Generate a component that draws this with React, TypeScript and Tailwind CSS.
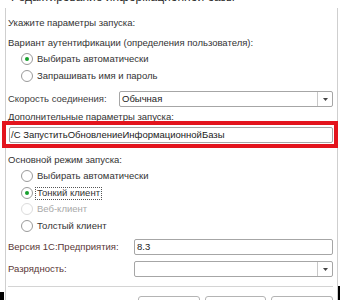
import React from "react";

function Radio({ label, checked, disabled, focus }: { label: string; checked?: boolean; disabled?: boolean; focus?: boolean }) {
  return (
    <div className="flex h-[16px] shrink-0 items-center pl-[13px]">
      <div
        className={
          "flex h-[12px] w-[12px] items-center justify-center rounded-full border bg-white " +
          (disabled ? "border-[#dcdcdc]" : "border-[#9a9a9a]")
        }
      >
        {checked && <div className="h-[4px] w-[4px] rounded-full bg-[#17a02e]" />}
      </div>
      <div
        className={
          "ml-[2px] flex h-[13px] items-center px-[1px] " +
          (focus ? "border border-dotted border-[#555]" : "border border-transparent") +
          (disabled ? " text-[#a8a8a8]" : " text-[#333]")
        }
      >
        {label}
      </div>
    </div>
  );
}

function Arrow() {
  return (
    <div className="flex w-[15px] items-center justify-center border-l border-[#c8c8c8]">
      <svg width="5" height="3" viewBox="0 0 5 3">
        <path d="M0 0 L5 0 L2.5 3 Z" fill="#444" />
      </svg>
    </div>
  );
}

export default function App() {
  return (
    <div className="relative h-[300px] w-[340px] overflow-hidden bg-white font-['Liberation_Sans',Arial,sans-serif] text-[9.5px] leading-none text-[#333]">
      {/* title strip (mostly scrolled off) */}
      <div className="h-[8px] overflow-hidden pl-[11px]">
        <div className="-mt-[9px] text-[12px] leading-[12px] text-[#2b2b2b]">Редактирование информационной базы</div>
      </div>

      <div className="ml-[5px] mr-[2px] flex flex-col border-l border-r border-[#cfcfcf] pb-[10px] pl-[2px] pr-[4px]">
        <div className="mt-[7px] flex h-[16px] shrink-0 items-center">Укажите параметры запуска:</div>
        <div className="mt-[4px] flex h-[16px] shrink-0 items-center">Вариант аутентификации (определения пользователя):</div>
        <Radio label="Выбирать автоматически" checked />
        <div className="mt-[1px] shrink-0">
          <Radio label="Запрашивать имя и пароль" />
        </div>

        <div className="mt-[7px] flex h-[16px] shrink-0 items-center">
          <div className="w-[111px] text-[#3d3d3d]">Скорость соединения:</div>
          <div className="flex h-[16px] flex-1 rounded-[2px] border border-[#a6a6a6]">
            <div className="flex flex-1 items-center pl-[2px] text-[#222]">Обычная</div>
            <Arrow />
          </div>
        </div>

        <div className="mt-[2px] flex h-[16px] shrink-0 items-center">Дополнительные параметры запуска:</div>
        <div className="mt-[2px] flex h-[16px] shrink-0 items-center pl-[1px]">
          <div className="flex h-[16px] flex-1 items-center rounded-[2px] border border-[#a6a6a6] pl-[1px] text-[#222]">
            /С ЗапуститьОбновлениеИнформационнойБазы
          </div>
        </div>

        <div className="mt-[9px] flex h-[16px] shrink-0 items-center">Основной режим запуска:</div>
        <Radio label="Выбирать автоматически" />
        <div className="mt-[1px] shrink-0">
          <Radio label="Тонкий клиент" checked focus />
        </div>
        <Radio label="Веб-клиент" disabled />
        <div className="mt-[1px] shrink-0">
          <Radio label="Толстый клиент" />
        </div>

        <div className="mt-[5px] flex h-[16px] shrink-0 items-center">
          <div className="w-[126px] text-[#5a3838]">Версия 1С:Предприятия:</div>
          <div className="flex h-[16px] flex-1 items-center rounded-[2px] border border-[#a6a6a6] pl-[2px] text-[#222]">8.3</div>
        </div>
        <div className="mt-[6px] flex h-[16px] shrink-0 items-center">
          <div className="w-[126px] text-[#5a3838]">Разрядность:</div>
          <div className="flex h-[16px] flex-1 rounded-[2px] border border-[#a6a6a6]">
            <div className="flex-1" />
            <Arrow />
          </div>
        </div>

        <div className="mt-[9px] h-px shrink-0 bg-[#d4d4d4]" />

        <div className="mt-[9px] flex shrink-0 justify-end gap-[5px]">
          <div className="h-[22px] w-[62px] rounded-[3px] border border-[#b4b4b4] bg-white" />
          <div className="h-[22px] w-[61px] rounded-[3px] border border-[#b4b4b4] bg-white" />
          <div className="h-[22px] w-[62px] rounded-[3px] border border-[#b4b4b4] bg-white" />
        </div>
      </div>

      {/* red highlight annotation */}
      <div className="absolute left-[2px] top-[121px] h-[27px] w-[336px] border-[4px] border-[#e3141d]" />

      {/* outside-window corners */}
      <div className="absolute bottom-0 left-0 h-[8px] w-[4px] bg-black" />
      <div className="absolute bottom-0 right-0 h-[14px] w-[2px] bg-black" />
    </div>
  );
}
